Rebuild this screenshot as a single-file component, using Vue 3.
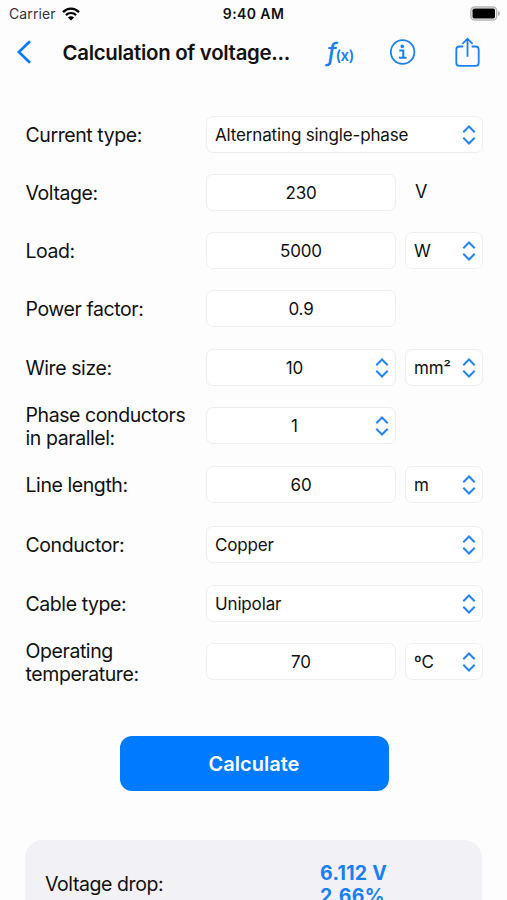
<script setup>
import { ref } from 'vue'

const fields = ref([
  { label: 'Current type:', value: 'Alternating single-phase', wide: true, select: true },
  { label: 'Voltage:', value: '230', suffix: 'V' },
  { label: 'Load:', value: '5000', unit: 'W' },
  { label: 'Power factor:', value: '0.9' },
  { label: 'Wire size:', value: '10', select: true, unit: 'mm²' },
  { label: 'Phase conductors\nin parallel:', value: '1', select: true },
  { label: 'Line length:', value: '60', unit: 'm' },
  { label: 'Conductor:', value: 'Copper', wide: true, select: true },
  { label: 'Cable type:', value: 'Unipolar', wide: true, select: true },
  { label: 'Operating\ntemperature:', value: '70', unit: 'ºC' },
])

const result = ref({ volts: '6.112 V', percent: '2.66%' })
</script>

<template>
  <div class="screen">
    <div class="status-bar">
      <div class="carrier">
        <span>Carrier</span>
        <svg class="wifi" width="18" height="14" viewBox="0 0 18 14" fill="none" stroke="#000">
          <path d="M1 5.1C5.5.5 12.5.5 17 5.1" stroke-width="2.3" />
          <path d="M3.9 8.1C6.7 5.3 11.3 5.3 14.1 8.1" stroke-width="2.2" />
          <path d="M9 13.5 5.9 10.4C7.6 8.7 10.4 8.7 12.1 10.4Z" fill="#000" stroke="none" />
        </svg>
      </div>
      <span class="clock">9:40 AM</span>
      <svg class="battery" width="31" height="15" viewBox="0 0 31 15">
        <rect x=".9" y=".9" width="25.7" height="13.2" rx="3.8" fill="#fff" stroke="#b5b5b5" stroke-width="1.5" />
        <rect x="2.5" y="2.5" width="22.5" height="10" rx="1.7" fill="#000" />
        <path d="M28 5v5c2.6-.8 2.6-4.2 0-5Z" fill="#b5b5b5" />
      </svg>
    </div>

    <header class="nav-bar">
      <svg class="back" width="16" height="26" viewBox="0 0 16 26" fill="none" stroke="#0a7aff" stroke-width="2.7">
        <path d="M14 2.3 2.9 13 14 23.7" />
      </svg>
      <h1 class="title">Calculation of voltage...</h1>
      <div class="fx"><i>f</i><span>(x)</span></div>
      <svg class="info" width="26" height="26" viewBox="0 0 26 26" fill="none" stroke="#1a7ff0">
        <circle cx="12.6" cy="13" r="11.8" stroke-width="1.8" />
        <circle cx="12.3" cy="7.4" r="1.8" fill="#1a7ff0" stroke="none" />
        <path d="M9.3 11.4h4v7.5M8.9 18.7h7.6" stroke-width="2" />
      </svg>
      <svg class="share" width="25" height="31" viewBox="0 0 25 31" fill="none" stroke="#1a7ff0" stroke-width="1.8">
        <path d="M8.3 9.5H4.4Q1.3 9.5 1.3 12.6V25.7Q1.3 28.8 4.4 28.8H20.6Q23.7 28.8 23.7 25.7V12.6Q23.7 9.5 20.6 9.5H16.7" />
        <path d="M12.5 19.700V2M7.4 6.8 12.5 1.7 17.6 6.8" />
      </svg>
    </header>

    <form class="form" @submit.prevent>
      <div v-for="field in fields" :key="field.label" class="row">
        <label class="label">{{ field.label }}</label>
        <div class="box" :class="{ wide: field.wide, picker: field.select && !field.wide }">
          <span class="value">{{ field.value }}</span>
          <svg v-if="field.select" class="chevrons" width="14" height="20" viewBox="0 0 14 20">
            <path d="M1.3 7.3 7 1.5 12.7 7.3M1.3 12.7 7 18.5 12.7 12.7" />
          </svg>
        </div>
        <div v-if="field.unit" class="box unit">
          <span class="value">{{ field.unit }}</span>
          <svg class="chevrons" width="14" height="20" viewBox="0 0 14 20">
            <path d="M1.3 7.3 7 1.5 12.7 7.3M1.3 12.7 7 18.5 12.7 12.7" />
          </svg>
        </div>
        <span v-if="field.suffix" class="suffix">{{ field.suffix }}</span>
      </div>
    </form>

    <button class="calculate">Calculate</button>

    <section class="result">
      <span class="result-label">Voltage drop:</span>
      <div class="result-values">
        <span>{{ result.volts }}</span>
        <span>{{ result.percent }}</span>
      </div>
    </section>
  </div>
</template>

<style>
body {
  background: #fdfdfd;
  overflow: hidden;
}
</style>

<style scoped>
.screen {
  box-sizing: border-box;
  width: 507px;
  height: 900px;
  overflow: hidden;
  background: #fdfdfd;
  color: #111;
  font-family: Inter, 'Liberation Sans', sans-serif;
}

.status-bar {
  display: grid;
  grid-template-columns: 1fr auto 1fr;
  align-items: center;
  height: 27px;
  padding: 0 6px 0 9px;
  font-size: 14px;
}

.carrier {
  display: flex;
  align-items: center;
  gap: 6px;
  color: #333;
  letter-spacing: 0.1px;
}

.clock {
  margin-right: 3px;
  font-weight: 600;
  letter-spacing: 0.4px;
}

.battery {
  justify-self: end;
}

.nav-bar {
  display: flex;
  align-items: center;
  height: 50px;
  padding-left: 16px;
}

.title {
  width: 250px;
  margin: 0 0 0 30.5px;
  padding-top: 1px;
  font-size: 20.4px;
  font-weight: 600;
  line-height: 28px;
  letter-spacing: -0.28px;
  white-space: nowrap;
}

.fx {
  display: flex;
  align-items: baseline;
  width: 40px;
  margin-left: 14.5px;
  padding-top: 3px;
  color: #1a7ff0;
  line-height: 28px;
}

.fx i {
  width: 8.5px;
  font-size: 25px;
  font-weight: 500;
}

.fx span {
  font-size: 15px;
  font-weight: 600;
  letter-spacing: -0.5px;
}

.info {
  margin-left: 23px;
}

.share {
  margin-left: 38.5px;
}

.form {
  display: grid;
  grid-template-rows: 58px 58px 58px 59px 58px 59px 60px 59px 58px 37px;
  padding: 39px 24px 0 25.5px;
}

.row {
  display: grid;
  grid-template-rows: 37px;
  grid-template-columns: 180.5px 190px 9px 78px;
  align-items: center;
  align-content: center;
  height: 37px;
}

.label {
  padding-top: 2px;
  font-size: 19.5px;
  line-height: 23px;
  letter-spacing: -0.42px;
  white-space: pre;
}

.box {
  display: flex;
  align-items: center;
  justify-content: center;
  box-sizing: border-box;
  height: 37px;
  border: 1px solid #eeeef0;
  border-radius: 7px;
  background: #fff;
  font-size: 17px;
  letter-spacing: -0.15px;
}

.box.wide {
  grid-column: 2 / 5;
  justify-content: space-between;
  padding: 0 6px 0 8px;
}

.box.picker {
  padding-right: 6px;
}

.picker .value {
  flex: 1;
  padding-left: 7px;
  text-align: center;
}

.box.unit {
  grid-column: 4;
  justify-content: space-between;
  padding: 0 6px 0 8px;
}

.chevrons {
  fill: none;
  stroke: #2483f5;
  stroke-width: 2;
}

.suffix {
  grid-column: 4;
  padding: 0 0 2px 10px;
  font-size: 18px;
}

.calculate {
  display: block;
  width: 269px;
  height: 55px;
  margin: 56px 0 0 119.5px;
  padding: 0;
  border: none;
  border-radius: 12px;
  background: #007aff;
  color: #fff;
  font-family: inherit;
  font-size: 20px;
  font-weight: 600;
}

.result {
  display: flex;
  box-sizing: border-box;
  width: 457px;
  height: 140px;
  margin: 49px 0 0 25px;
  padding: 22px 20px;
  border-radius: 18px;
  background: #f1f1f6;
}

.result-label {
  width: 275px;
  padding-top: 11px;
  font-size: 19.5px;
  line-height: 23px;
  letter-spacing: -0.42px;
}

.result-values {
  display: flex;
  flex-direction: column;
  color: #1a7ff0;
  font-size: 19.5px;
  font-weight: 700;
  line-height: 23px;
  letter-spacing: 0.3px;
}
</style>
